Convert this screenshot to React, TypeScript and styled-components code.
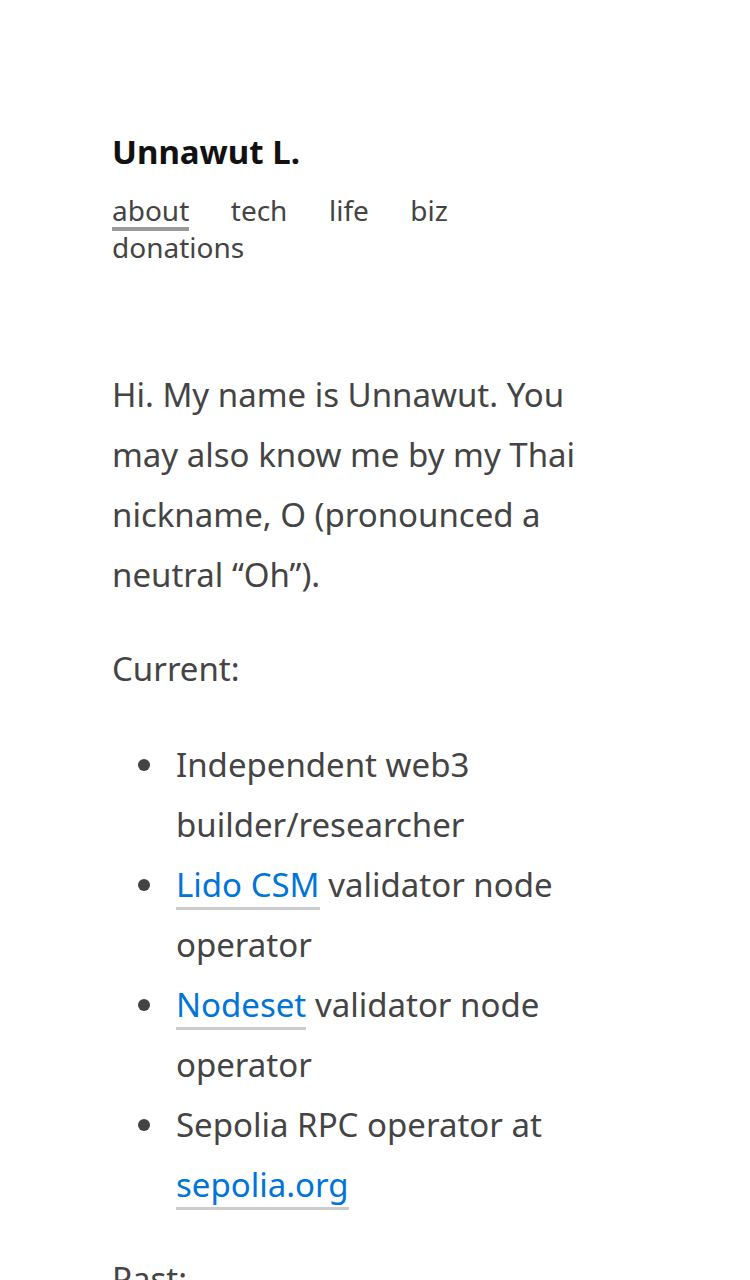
import React from 'react';
import styled, { createGlobalStyle } from 'styled-components';

const GlobalStyle = createGlobalStyle`
  html, body {
    margin: 0;
    padding: 0;
    background: #fff;
  }
  body {
    font-family: "Noto Sans", "Open Sans", sans-serif;
    color: #444;
  }
`;

const Page = styled.div`
  padding: 130px 158px 0 112px;
`;

const Header = styled.header`
  margin-bottom: 97px;
`;

const SiteTitle = styled.div`
  font-size: 33px;
  font-weight: 700;
  line-height: 44px;
  color: #111;
  margin-bottom: 20px;
`;

const Nav = styled.nav`
  display: flex;
  flex-wrap: wrap;
  column-gap: 41.5px;
  font-size: 28px;
  line-height: 37px;
`;

const NavItem = styled.a<{ $active?: boolean }>`
  color: #444;
  text-decoration: none;
  box-shadow: ${p => (p.$active ? 'inset 0 -4px 0 #999' : 'none')};
  line-height: 32px;
  padding-bottom: 1px;
  height: 37px;
  box-sizing: border-box;
`;

const Text = styled.p`
  font-size: 33px;
  line-height: 60px;
  margin: 0 0 34px;
`;

const List = styled.ul`
  font-size: 33px;
  line-height: 60px;
  margin: 36px 0 34px;
  padding-left: 64px;
  list-style: none;
`;

const Item = styled.li`
  position: relative;

  &::before {
    content: '';
    position: absolute;
    left: -38px;
    top: 24px;
    width: 12px;
    height: 12px;
    border-radius: 50%;
    background: #444;
  }
`;

const Link = styled.a`
  color: #0074d9;
  text-decoration: none;
  border-bottom: 3px solid #ccc;
`;

export default function App() {
  return (
    <>
      <GlobalStyle />
      <Page>
        <Header>
          <SiteTitle>Unnawut L.</SiteTitle>
          <Nav>
            <NavItem $active>about</NavItem>
            <NavItem>tech</NavItem>
            <NavItem>life</NavItem>
            <NavItem>biz</NavItem>
            <NavItem>donations</NavItem>
          </Nav>
        </Header>
        <Text>
          Hi. My name is Unnawut. You may also know me by my Thai nickname, O
          (pronounced a neutral “Oh”).
        </Text>
        <Text>Current:</Text>
        <List>
          <Item>Independent web3 builder/researcher</Item>
          <Item>
            <Link>Lido CSM</Link> validator node operator
          </Item>
          <Item>
            <Link>Nodeset</Link> validator node operator
          </Item>
          <Item>
            Sepolia RPC operator at <Link>sepolia.org</Link>
          </Item>
        </List>
        <Text>Past:</Text>
      </Page>
    </>
  );
}
